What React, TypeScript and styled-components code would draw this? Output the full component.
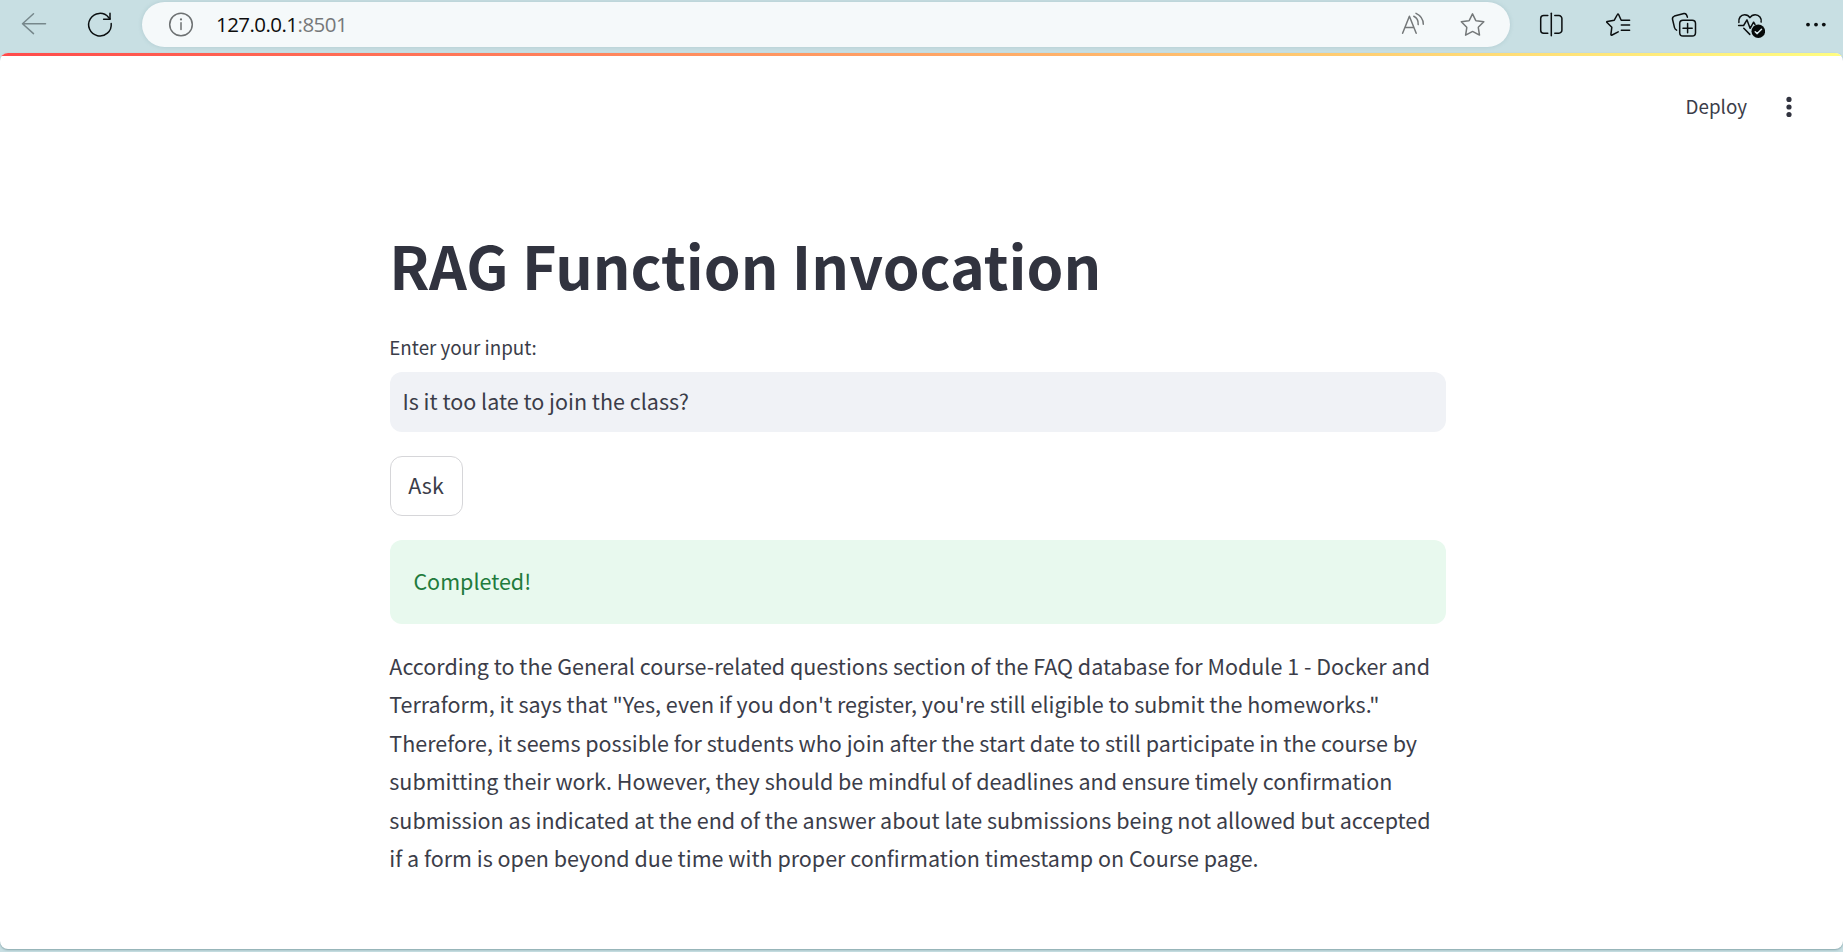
import React, { useState } from "react";
import styled, { createGlobalStyle } from "styled-components";

const GlobalStyle = createGlobalStyle`
  *, *::before, *::after { box-sizing: border-box; }
  html, body, #root { height: 100%; }
  body {
    margin: 0;
    overflow: hidden;
    background: #c8dfe3;
    color: #3b3d49;
    font-family: "Noto Sans CJK SC", "Open Sans", sans-serif;
    font-size: 21.5px;
  }
  button, input { font: inherit; color: inherit; }
`;

const Browser = styled.div`
  display: flex;
  flex-direction: column;
  height: 952px;
  background: #c8dfe3;
`;

const Toolbar = styled.header`
  display: flex;
  align-items: center;
  flex: none;
  height: 48px;
  margin-bottom: 5px;
  padding: 0 13px 0 20px;
`;

const ToolIcon = styled.svg<{ $tone?: string; $gap?: number }>`
  flex: none;
  width: 28px;
  height: 28px;
  margin-left: ${(p) => p.$gap ?? 0}px;
  fill: none;
  stroke: ${(p) => p.$tone ?? "#0b0f10"};
  stroke-width: 1.5;
  stroke-linecap: round;
  stroke-linejoin: round;
`;

const AddressBar = styled.div`
  display: flex;
  align-items: center;
  width: 1368px;
  height: 45px;
  margin: 1px 0 0 28px;
  padding: 0 23px 1px 25px;
  border-radius: 23px;
  background: #f5f9fa;
  box-shadow: 0 0 4px rgba(90, 130, 140, 0.22);
`;

const Url = styled.span`
  flex: 1;
  margin-left: 21px;
  color: #0d0d0d;
  font-family: "Open Sans", sans-serif;
  font-size: 20.5px;
  letter-spacing: -0.55px;
  line-height: 28px;
`;

const Port = styled.span`
  color: #767879;
`;

const Viewport = styled.div`
  flex: none;
  height: 896px;
  overflow: hidden;
  border-radius: 8px;
  background: #fff;
  box-shadow: 0 1px 2px rgba(70, 110, 115, 0.5);
`;

const Decoration = styled.div`
  height: 3px;
  background: linear-gradient(90deg, #ff4b4b, #fffd80);
`;

const AppHeader = styled.div`
  display: flex;
  justify-content: flex-end;
  align-items: center;
  height: 100px;
  padding-right: 40px;
`;

const DeployButton = styled.button`
  margin: 0 28px 0 0;
  padding: 0;
  border: 0;
  background: none;
  font-size: 18.8px;
  line-height: 32px;
`;

const Kebab = styled.svg`
  width: 28px;
  height: 28px;
  fill: #31333f;
`;

const Main = styled.main`
  display: flex;
  flex-direction: column;
  align-items: flex-start;
  width: 1056px;
  margin: 69px 0 0 390px;
`;

const Title = styled.h1`
  margin: 0 0 27px -0.7px;
  color: #31333f;
  font-size: 59px;
  font-weight: 700;
  line-height: 79px;
`;

const Label = styled.label`
  margin: 0 0 9px -0.7px;
  font-size: 18.8px;
  line-height: 32px;
`;

const TextInput = styled.input`
  width: 100%;
  height: 60px;
  margin-bottom: 24px;
  padding: 0 12.4px 3px;
  border: 0;
  border-radius: 12px;
  outline: 0;
  background: #f0f2f6;
`;

const AskButton = styled.button`
  width: 73px;
  height: 60px;
  margin-bottom: 24px;
  padding: 0 1px 3px 0;
  border: 1px solid #d6d6d9;
  border-radius: 12px;
  background: #fff;
`;

const Success = styled.div`
  width: 100%;
  height: 84px;
  margin-bottom: 23px;
  padding: 22px 23.4px;
  border-radius: 12px;
  background: #e8f9ee;
  color: #217b3c;
  line-height: 37px;
`;

const Answer = styled.p`
  margin: 0 0 0 -0.7px;
  line-height: 38.4px;
  white-space: nowrap;
`;

const answerLines = [
  "According to the General course-related questions section of the FAQ database for Module 1 - Docker and",
  "Terraform, it says that \"Yes, even if you don't register, you're still eligible to submit the homeworks.\"",
  "Therefore, it seems possible for students who join after the start date to still participate in the course by",
  "submitting their work. However, they should be mindful of deadlines and ensure timely confirmation",
  "submission as indicated at the end of the answer about late submissions being not allowed but accepted",
  "if a form is open beyond due time with proper confirmation timestamp on Course page.",
];

const GREY = "#747879";

export default function App() {
  const [question, setQuestion] = useState("Is it too late to join the class?");

  return (
    <Browser>
      <GlobalStyle />
      <Toolbar>
        <ToolIcon viewBox="0 0 28 28" $tone="#76878b">
          <path d="M25.5 13.7H2.5M13.5 3.8 2.5 13.7 13.5 23.6" />
        </ToolIcon>
        <ToolIcon viewBox="0 0 28 28" $gap={38}>
          <path d="M25.2 13.6A11.3 11.3 0 1 1 22.6 7.4L24 9" />
          <path d="M24 3.2V9.2H17.6" />
        </ToolIcon>
        <AddressBar>
          <ToolIcon viewBox="0 0 28 28" $tone="#6d7172">
            <circle cx="14" cy="14.5" r="11.3" />
            <path d="M14 12.8V19.6" />
            <circle cx="14" cy="9.4" r="1.1" fill="#6d7172" stroke="none" />
          </ToolIcon>
          <Url>
            127.0.0.1<Port>:8501</Port>
          </Url>
          <ToolIcon viewBox="0 0 28 28" $tone={GREY}>
            <path d="M4.6 23.2 11.4 6.3 18.2 23.2M7.1 17.6H15.7" />
            <path d="M15.8 6.3C18.8 7.6 20.4 10.4 20.2 14.6" />
            <path d="M18 3.4C22.5 5.5 25.2 9.4 25.3 14.2" />
          </ToolIcon>
          <ToolIcon viewBox="0 0 28 28" $tone={GREY} $gap={33}>
            <path d="M13.5 3.9 16.7 10.3Q16.9 10.7 17.3 10.8L24.8 11.8 19.5 17Q19.2 17.3 19.3 17.7L20.5 25.1 14 21.7Q13.6 21.5 13.2 21.7L6.6 25.1 7.8 17.7Q7.8 17.3 7.5 17L2.3 11.8 9.7 10.8Q10.1 10.7 10.3 10.3Z" />
          </ToolIcon>
        </AddressBar>
        <ToolIcon viewBox="0 0 28 28" $gap={27}>
          <path d="M14.3 3.3V25.8" />
          <path d="M10.8 5.6H6.7A3 3 0 0 0 3.7 8.6V20.2A3 3 0 0 0 6.7 23.2H10.8M17.8 5.6H21.9A3 3 0 0 1 24.9 8.6V20.2A3 3 0 0 1 21.9 23.2H17.8" />
        </ToolIcon>
        <ToolIcon viewBox="0 0 28 28" $gap={39}>
          <path d="M25.6 10.2H17.2L14.6 4.5Q14 3.3 13.4 4.5L10.3 10.2 3.3 11.4Q2.2 11.7 3 12.5L7.8 17.3 6.9 24.3Q6.9 25.7 8.1 25L14.2 21.8" />
          <path d="M17.3 15.1H25.6M17.3 20.2H25.6" />
        </ToolIcon>
        <ToolIcon viewBox="0 0 28 28" $gap={38}>
          <rect x="9.7" y="10.3" width="15.8" height="15.8" rx="3.3" />
          <path d="M17.6 13.6V22.8M13 18.2H22.2" />
          <path d="M6.6 20.2Q5 19.4 4.5 17.6L2.5 9.3Q2.1 6.9 4.4 6.1L14 3.6Q16.5 3.2 17.4 7.2" />
        </ToolIcon>
        <ToolIcon viewBox="0 0 28 28" $gap={39}>
          <path d="M1.9 12.4C1.3 8.4 3.7 4.7 7.6 4.7 10.1 4.7 11.9 5.8 12.9 7.7 14.1 5.8 15.8 4.7 18.2 4.7 22.2 4.7 24.9 8.4 24.1 12" />
          <path d="M1.6 15.5H6.6L10 9.9 13.1 18.3 16.6 12.2 18 14.5" />
          <path d="M6.8 18.3 12.8 24.4" />
          <circle cx="21.3" cy="21.2" r="6.8" fill="#060909" stroke="none" />
          <path d="M18.2 21.7 20.2 23.6 24.5 19.2" stroke="#d8e8eb" />
        </ToolIcon>
        <ToolIcon viewBox="0 0 28 28" $gap={37}>
          <g fill="#0b0f10" stroke="none">
            <circle cx="6" cy="14.6" r="1.9" />
            <circle cx="14" cy="14.6" r="1.9" />
            <circle cx="21.8" cy="14.6" r="1.9" />
          </g>
        </ToolIcon>
      </Toolbar>
      <Viewport>
        <Decoration />
        <AppHeader>
          <DeployButton>Deploy</DeployButton>
          <Kebab viewBox="0 0 28 28">
            <circle cx="14" cy="7.4" r="2.6" />
            <circle cx="14" cy="15" r="2.6" />
            <circle cx="14" cy="22.5" r="2.6" />
          </Kebab>
        </AppHeader>
        <Main>
          <Title>RAG Function Invocation</Title>
          <Label htmlFor="question">Enter your input:</Label>
          <TextInput
            id="question"
            value={question}
            onChange={(e) => setQuestion(e.target.value)}
          />
          <AskButton>Ask</AskButton>
          <Success>Completed!</Success>
          <Answer>
            {answerLines.map((line) => (
              <React.Fragment key={line}>
                {line}
                <br />
              </React.Fragment>
            ))}
          </Answer>
        </Main>
      </Viewport>
    </Browser>
  );
}
